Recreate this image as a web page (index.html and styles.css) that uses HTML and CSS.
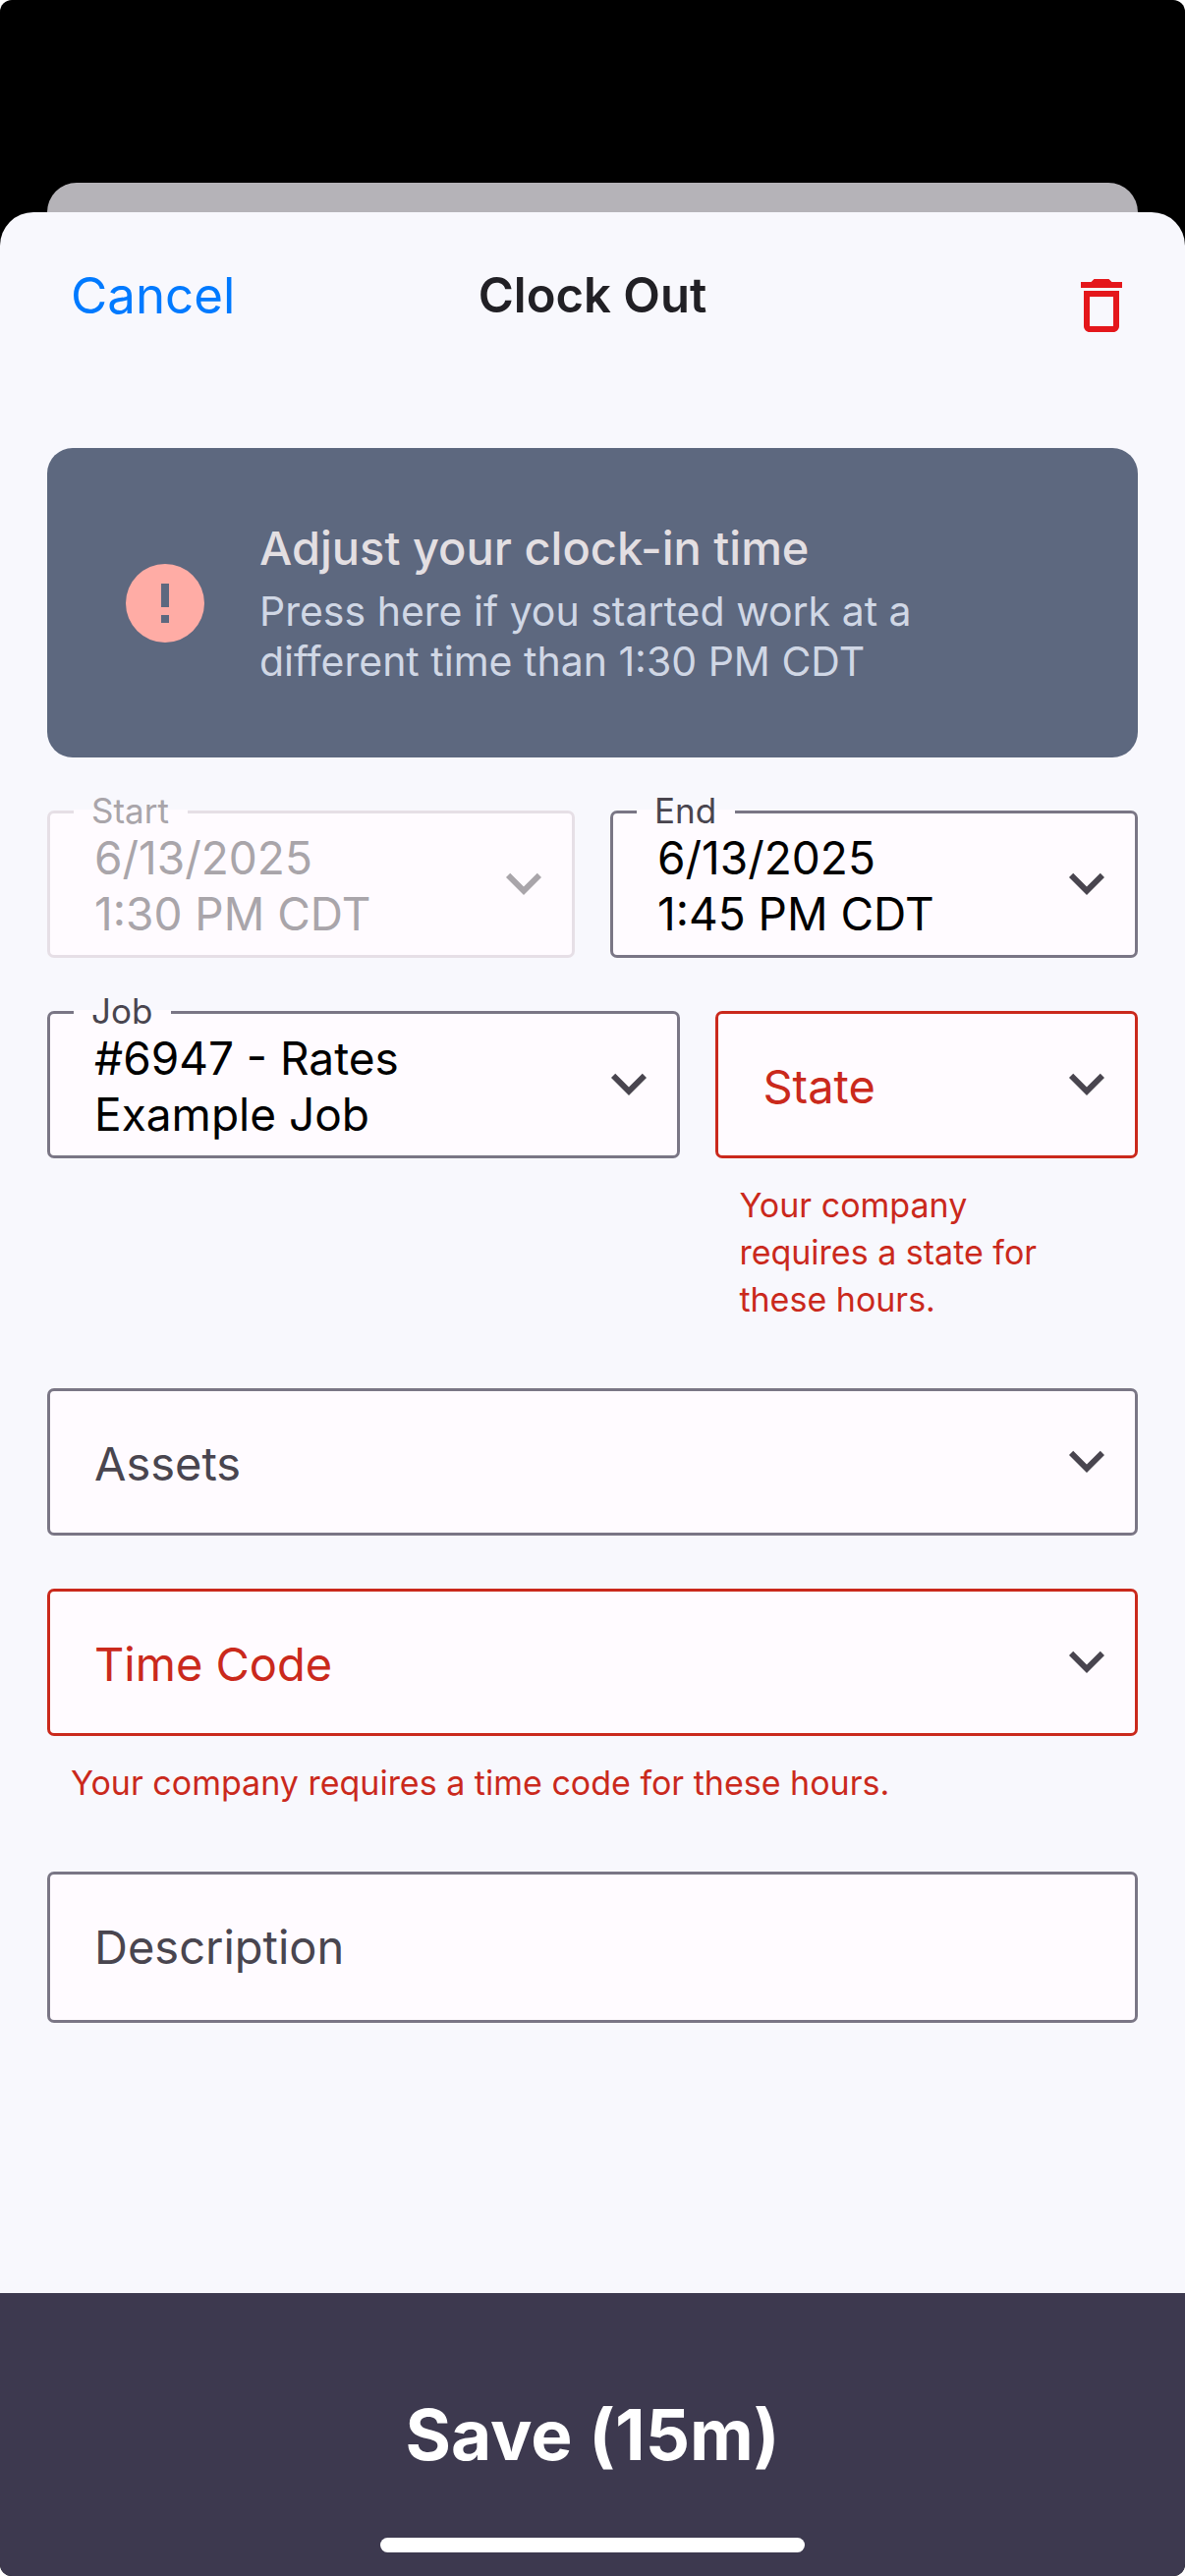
FILE: index.html
```
<!DOCTYPE html>
<html lang="en">
<head>
  <meta charset="UTF-8">
  <title>Clock Out</title>
  <meta name="viewport" content="width=device-width, initial-scale=1.0">
  <link rel="stylesheet" href="styles.css">
</head>
<body>
  <!-- Shared icons -->
  <svg class="sprite" aria-hidden="true">
    <symbol id="chevron" viewBox="0 0 24 24">
      <path d="M7.41 8.58 12 13.17l4.59-4.59L18 10l-6 6-6-6z"/>
    </symbol>
  </svg>

  <div class="screen">
    <div class="back-sheet"></div>

    <main class="sheet">
      <header class="nav">
        <button type="button" class="cancel">Cancel</button>
        <h1>Clock Out</h1>
        <button type="button" class="delete" aria-label="Delete">
          <svg class="icon" viewBox="0 0 24 24" aria-hidden="true">
            <path d="M6 19c0 1.1.9 2 2 2h8c1.1 0 2-.9 2-2V7H6v12zM8 9h8v10H8V9zm7.5-5-1-1h-5l-1 1H5v2h14V4z"/>
          </svg>
        </button>
      </header>

      <form class="content" id="clock-out">
        <button type="button" class="notice">
          <svg class="notice-icon" viewBox="0 0 24 24" aria-hidden="true">
            <path d="M13 13h-2V7h2m0 10h-2v-2h2M12 2a10 10 0 1 0 0 20 10 10 0 0 0 0-20z"/>
          </svg>
          <span class="notice-text">
            <span class="notice-title">Adjust your clock-in time</span>
            <span class="notice-body">Press here if you started work at a<br>different time than 1:30 PM CDT</span>
          </span>
        </button>

        <div class="row">
          <div class="field disabled">
            <label class="floating" for="start">Start</label>
            <button type="button" class="control" id="start" aria-haspopup="dialog" disabled>6/13/2025<br>1:30 PM CDT</button>
            <svg class="icon chevron" aria-hidden="true"><use href="#chevron"/></svg>
          </div>
          <div class="field">
            <label class="floating" for="end">End</label>
            <button type="button" class="control" id="end" aria-haspopup="dialog">6/13/2025<br>1:45 PM CDT</button>
            <svg class="icon chevron" aria-hidden="true"><use href="#chevron"/></svg>
          </div>
        </div>

        <div class="row row-job">
          <div class="field">
            <label class="floating" for="job">Job</label>
            <button type="button" class="control" id="job" aria-haspopup="dialog">#6947 - Rates<br>Example Job</button>
            <svg class="icon chevron" aria-hidden="true"><use href="#chevron"/></svg>
          </div>
          <div class="field error">
            <label class="resting" for="state">State</label>
            <select class="control" id="state" aria-describedby="state-error"><option value=""></option></select>
            <svg class="icon chevron" aria-hidden="true"><use href="#chevron"/></svg>
            <p class="helper" id="state-error">Your company<br>requires a state for these hours.</p>
          </div>
        </div>

        <div class="field">
          <label class="resting" for="assets">Assets</label>
          <select class="control" id="assets"><option value=""></option></select>
          <svg class="icon chevron" aria-hidden="true"><use href="#chevron"/></svg>
        </div>

        <div class="field error">
          <label class="resting" for="time-code">Time Code</label>
          <select class="control" id="time-code" aria-describedby="time-code-error"><option value=""></option></select>
          <svg class="icon chevron" aria-hidden="true"><use href="#chevron"/></svg>
          <p class="helper" id="time-code-error">Your company requires a time code for these hours.</p>
        </div>

        <div class="field">
          <label class="resting" for="description">Description</label>
          <input type="text" class="control" id="description">
        </div>
      </form>
    </main>

    <footer class="footer">
      <button type="submit" class="save" form="clock-out">Save (15m)</button>
      <span class="home-indicator"></span>
    </footer>
  </div>
</body>
</html>
```

FILE: styles.css
```
* {
  box-sizing: border-box;
}

body {
  margin: 0;
  background-color: #ffffff;
  font-family: Inter, Roboto, "Liberation Sans", sans-serif;
  color: #000000;
}

button,
select,
input {
  margin: 0;
  padding: 0;
  border: none;
  background: none;
  font: inherit;
  color: inherit;
}

button {
  cursor: pointer;
}

.sprite {
  display: none;
}

.screen {
  min-height: 100vh;
  display: flex;
  flex-direction: column;
  padding-top: 186px;
  background-color: #000000;
  border-radius: 12px;
  overflow: hidden;
}

.back-sheet {
  height: 30px;
  margin: 0 48px;
  background-color: #b5b3b8;
  border-radius: 30px 30px 0 0;
}

.sheet {
  flex: 1;
  background-color: #f8f8fd;
  border-radius: 34px 34px 0 0;
}

/* Top bar */
.nav {
  display: grid;
  grid-template-columns: 1fr auto 1fr;
  align-items: center;
  height: 168px;
  padding: 0 49px;
}

.nav h1 {
  margin: 0;
  font-size: 49px;
  font-weight: 600;
  color: #212025;
}

.cancel {
  justify-self: start;
  padding-left: 23px;
  font-size: 51px;
  color: #007aff;
}

.icon {
  display: block;
  width: 72px;
  height: 72px;
  fill: currentColor;
}

.delete {
  justify-self: end;
  padding-top: 22px;
  color: #e4171b;
}

.content {
  display: flex;
  flex-direction: column;
  gap: 54px;
  padding: 72px 48px;
}

/* Notice card */
.notice {
  display: flex;
  align-items: center;
  gap: 48px;
  padding: 72px;
  border-radius: 26px;
  background-color: #5d687f;
  text-align: left;
}

.notice-icon {
  flex: none;
  width: 96px;
  height: 96px;
  fill: #ffaca5;
}

.notice-title,
.notice-body {
  display: block;
}

.notice-title {
  margin-bottom: 9px;
  font-size: 47px;
  font-weight: 500;
  line-height: 60px;
  color: #e3dfe2;
}

.notice-body {
  font-size: 41px;
  line-height: 51px;
  color: #d0d7e5;
}

/* Outlined fields */
.row {
  display: grid;
  grid-template-columns: 1fr 1fr;
  gap: 36px;
}

.row-job {
  grid-template-columns: 3fr 2fr;
}

.field {
  position: relative;
  color: #49454f;
}

.control {
  display: block;
  width: 100%;
  height: 150px;
  padding: 4px 96px 0 45px;
  border: 3px solid #7a7685;
  border-radius: 7px;
  background-color: #fffbff;
  appearance: none;
  font-size: 46px;
  line-height: 57px;
  text-align: left;
  color: #000000;
}

input.control {
  height: 154px;
  padding-right: 45px;
}

.floating {
  position: absolute;
  top: -24px;
  left: 27px;
  padding: 0 19px 0 18px;
  font-size: 35px;
  line-height: 48px;
  /* only the lower half hides the border */
  background: linear-gradient(transparent 23px, #fffbff 23px);
}

.resting {
  position: absolute;
  top: 48px;
  left: 48px;
  font-size: 47px;
  line-height: 57px;
  pointer-events: none;
}

.chevron {
  position: absolute;
  top: 38px;
  right: 16px;
  pointer-events: none;
}

.helper {
  margin: 0;
  padding: 24px 24px 12px;
  font-size: 34px;
  line-height: 48px;
}

.disabled,
.disabled .control {
  color: #a9a5aa;
}

.disabled .control {
  border-color: #e6dfe6;
}

.error .resting,
.error .helper {
  color: #ca291c;
}

.error .control {
  border-color: #ca291c;
}

/* Save bar */
.footer {
  position: relative;
  background-color: #3d394f;
}

.save {
  display: block;
  width: 100%;
  height: 288px;
  font-size: 71px;
  font-weight: 700;
  color: #ffffff;
}

.home-indicator {
  position: absolute;
  bottom: 24px;
  left: 50%;
  width: 432px;
  height: 15px;
  border-radius: 8px;
  background-color: #ffffff;
  transform: translateX(-50%);
}
```
